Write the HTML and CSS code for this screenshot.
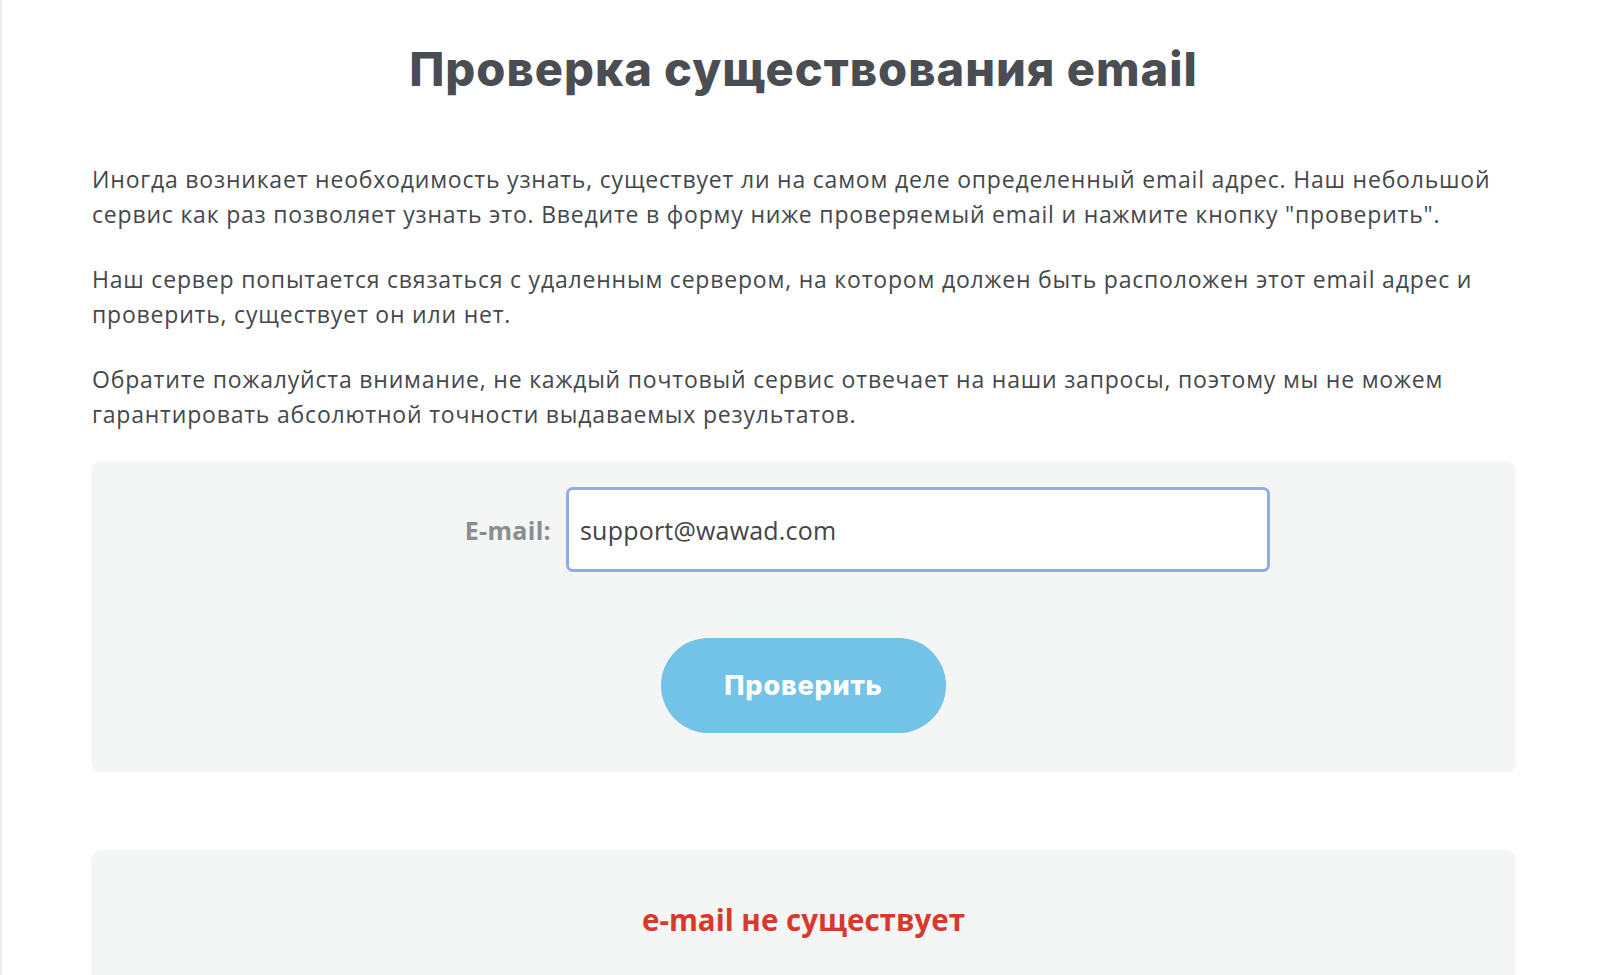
FILE: index.html
```html
<!DOCTYPE html>
<html lang="ru">
<head>
  <meta charset="UTF-8">
  <meta name="viewport" content="width=device-width, initial-scale=1.0">
  <title>Проверка существования email</title>
  <link rel="stylesheet" href="styles.css">
</head>
<body>
  <div class="page">
    <div class="container">
      <h1>Проверка существования email</h1>

      <p>Иногда возникает необходимость узнать, существует ли на самом деле определенный email адрес. Наш небольшой сервис как раз позволяет узнать это. Введите в форму ниже проверяемый email и нажмите кнопку "проверить".</p>
      <p>Наш сервер попытается связаться с удаленным сервером, на котором должен быть расположен этот email адрес и проверить, существует он или нет.</p>
      <p>Обратите пожалуйста внимание, не каждый почтовый сервис отвечает на наши запросы, поэтому мы не можем гарантировать абсолютной точности выдаваемых результатов.</p>

      <!-- Check form -->
      <form class="panel check-form" onsubmit="return false;">
        <div class="form-row">
          <label for="email">E-mail:</label>
          <input type="text" id="email" value="support@wawad.com">
        </div>
        <button type="submit">Проверить</button>
      </form>

      <!-- Result -->
      <div class="panel result">
        <div class="result-text">e-mail не существует</div>
      </div>
    </div>
  </div>
</body>
</html>
```

FILE: styles.css
```css
html, body {
  margin: 0;
  height: 100%;
  overflow: hidden;
}
body {
  font-family: "Open Sans", Lato, sans-serif;
  color: #45484b;
  background: #fff;
}
.page {
  border-left: 2px solid #ededed;
  min-height: 100%;
  padding: 0 85px 0 90px;
}
.container {
  width: 1423px;
}
h1 {
  margin: 0 0 64px;
  padding-top: 40px;
  line-height: 58px;
  font-family: Inter, sans-serif;
  font-size: 47px;
  font-weight: 800;
  letter-spacing: 1px;
  text-align: center;
  color: #4a4e53;
}
p {
  margin: 0 0 30px;
  font-size: 23px;
  font-weight: 500;
  line-height: 35px;
  letter-spacing: 0.8px;
}
.panel {
  background: #f4f5f5;
  border-radius: 9px;
  box-shadow: 0 0 3px rgba(0, 0, 0, 0.07);
}
.check-form {
  margin: 0;
  padding: 25px 0 39px;
  display: flex;
  flex-direction: column;
  align-items: center;
}
.form-row {
  display: grid;
  grid-template-columns: 474px 704px;
  align-self: stretch;
}
label {
  align-self: center;
  padding-right: 15px;
  text-align: right;
  font-size: 25px;
  font-weight: 700;
  letter-spacing: 0.3px;
  color: #8b8d8e;
}
input {
  box-sizing: border-box;
  height: 85px;
  padding: 0 11px;
  border: 3px solid #92abe8;
  border-radius: 7px;
  background: #fff;
  font-family: "Open Sans", sans-serif;
  font-size: 25px;
  font-weight: 500;
  letter-spacing: 0.2px;
  color: #444;
  outline: none;
}
button {
  margin-top: 66px;
  width: 285px;
  height: 95px;
  border: none;
  border-radius: 48px;
  background: #72c3e7;
  color: #fff;
  font-family: Inter, sans-serif;
  font-size: 27px;
  font-weight: 800;
  letter-spacing: 0.8px;
  cursor: pointer;
}
.result {
  margin-top: 79px;
  padding: 50px 0;
  text-align: center;
}
.result-text {
  line-height: 38px;
  font-size: 29.5px;
  font-weight: 700;
  color: #d9392c;
}
```
